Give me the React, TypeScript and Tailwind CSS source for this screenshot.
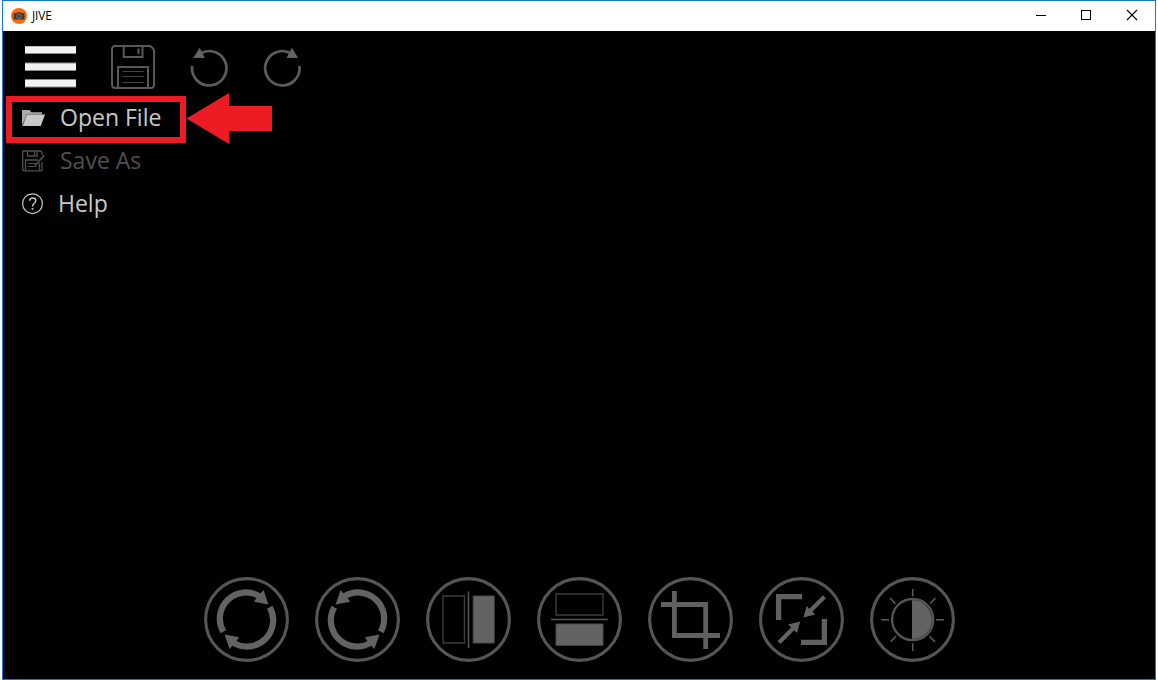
import type { ReactNode } from "react";

function AppLogo() {
  return (
    <svg className="h-4 w-4" viewBox="0 0 16 16">
      <circle cx="8" cy="8" r="8" fill="#ff6a0a" />
      <path d="M2.600 5h3l.8-.8h3.300l.8.8h3v6.400H2.600z" fill="#3c3c3c" />
      <circle cx="8" cy="8.100" r="2.200" fill="#4a4038" stroke="#858585" strokeWidth=".8" />
    </svg>
  );
}

function TitleBar() {
  return (
    <header className="flex h-[30px] shrink-0 items-center justify-between bg-white pl-2">
      <div className="flex items-center gap-[5px]">
        <AppLogo />
        <span className="text-[12px] leading-4 tracking-[-0.2px] text-black">JIVE</span>
      </div>
      <div className="flex h-full items-center">
        <svg className="h-[30px] w-[45px]" viewBox="0 0 45 30" shapeRendering="crispEdges">
          <path d="M16 14h10v1H16z" />
        </svg>
        <svg className="h-[30px] w-[45px]" viewBox="0 0 45 30" shapeRendering="crispEdges">
          <path d="M16.500 9.500h9v9h-9z" fill="none" stroke="#000" />
        </svg>
        <svg className="h-[30px] w-[45px]" viewBox="0 0 45 30">
          <path d="M17 9l10 10M27 9L17 19" fill="none" stroke="#000" strokeWidth="1.100" />
        </svg>
      </div>
    </header>
  );
}

function Toolbar() {
  return (
    <div className="flex h-[65px] shrink-0 items-start pl-[22px] pt-[14px]">
      <svg className="mt-px h-[42px] w-[51px]" viewBox="0 0 51 42">
        <path d="M0 0h51v8H0zM0 16.500h51v8.500H0zM0 33h51v8.500H0z" fill="#8b8b8b" />
        <path d="M0 .5h51V7H0zM0 17.500h51V24H0zM0 34h51v6.500H0z" fill="#f2f2f2" />
      </svg>
      <svg className="ml-[35px] h-11 w-11" viewBox="0 0 44 44" fill="none" stroke="#585858">
        <path d="M4.500 1H38.500Q39.500 1 40.300 1.800l1.900 1.900Q43 4.500 43 5.500v34Q43 43 39.500 43h-35Q1 43 1 39.500v-35Q1 1 4.500 1z" strokeWidth="2" />
        <path d="M12.700 1.500V12h18.800V1.500M7 43V22h30v21" strokeWidth="2" />
        <path d="M27.500 3.500V9" strokeWidth="2" />
        <path d="M11.500 26.500h21M11.500 31.500h21M11.500 37.500h21" stroke="#444" />
      </svg>
      <svg className="ml-[35px] mt-[2px] h-11 w-10" viewBox="0 0 40 44">
        <path d="M2.200 19A17.200 17.200 0 1 0 12 5.700" fill="none" stroke="#5c5c5c" strokeWidth="2.700" />
        <path d="M9.700.8L3.200 10.900l11.700.2z" fill="#636363" />
      </svg>
      <svg className="ml-[33px] mt-[2px] h-11 w-10" viewBox="0 0 40 44">
        <path d="M36.400 19A17.200 17.200 0 1 1 26.600 5.700" fill="none" stroke="#5c5c5c" strokeWidth="2.700" />
        <path d="M28.900.8l6.300 10.100-11.700.2z" fill="#636363" />
      </svg>
    </div>
  );
}

function Menu() {
  return (
    <nav className="flex flex-col pl-[19px] text-[23px] text-[#c8c8c8]">
      <div className="flex h-[43px] items-center">
        <svg className="h-[22px] w-[23px]" viewBox="0 0 23 22">
          <path d="M0 18.500V3h7.500l2 2.300H20V9H5z" fill="#aaa" />
          <path d="M4.800 7.500H23L18.800 19H.5z" fill="#c8c8c8" />
          <path d="M.5 18.500L4.800 7.300H22" fill="none" stroke="#666" strokeWidth=".7" />
        </svg>
        <span className="ml-[15px] whitespace-nowrap">Open File</span>
      </div>
      <div className="flex h-[43px] items-center text-[#505050]">
        <svg className="h-[22px] w-[23px]" viewBox="0 0 23 22" fill="none" stroke="#505050">
          <path d="M20 5V2.500L18.500 1H1.500L.7 2v18l.8.8h17.700l.8-.8v-8" strokeWidth="1.300" />
          <path d="M5.500 1v5h9.500V1M12.500 2v3M3.500 20.500V10H16M17.500 13v7.500" strokeWidth="1.300" />
          <path d="M5.500 13.500h8M5.500 16.500h9" />
          <path d="M22 5.500l-7.500 8.500-2 .8" strokeWidth="1.800" />
        </svg>
        <span className="ml-[15px] whitespace-nowrap">Save As</span>
      </div>
      <div className="flex h-[43px] items-center">
        <svg className="h-[22px] w-[22px]" viewBox="0 0 22 22" fill="none" stroke="#c8c8c8">
          <circle cx="10.500" cy="10.700" r="9.900" strokeWidth="1.200" />
          <path d="M7.600 7.800Q7.800 4.900 10.700 4.900q3.100 0 3.100 2.700 0 1.600-1.700 2.900-1.500 1.200-1.500 2.900" strokeWidth="1.500" />
          <path d="M10.500 14.900v1.800" strokeWidth="1.800" />
        </svg>
        <span className="ml-[14px] whitespace-nowrap">Help</span>
      </div>
    </nav>
  );
}

function Callout() {
  return (
    <>
      <div className="absolute left-[3px] top-[65px] h-[47px] w-[180px] border-6 border-[#ed1c24]" />
      <svg className="absolute left-[183px] top-[62px] h-[52px] w-[87px]" viewBox="0 0 87 52">
        <path d="M.5 25.500L43 0v13h43v25H43v13z" fill="#ed1c24" />
      </svg>
    </>
  );
}

function RotateArrows() {
  return (
    <>
      <path d="M19.300 54.700A26.200 26.200 0 0 1 56 19.500M65.700 30.300A26.200 26.200 0 0 1 29 65.500" fill="none" stroke="#636363" strokeWidth="6.200" />
      <path d="M59.500 13L64.400 27.500 49.800 24.800 54 19zM25.500 72L20.600 57.500 35.200 60.200 31 66z" />
    </>
  );
}

const tools: { name: string; icon: ReactNode }[] = [
  { name: "rotate-right", icon: <RotateArrows /> },
  { name: "rotate-left", icon: <g transform="translate(85 0) scale(-1 1)"><RotateArrows /></g> },
  {
    name: "flip-horizontal",
    icon: (
      <>
        <path d="M17 19h21.500v47H17z" fill="none" stroke="#3c3c3c" strokeWidth="1.400" />
        <path d="M42.500 14.300V71" stroke="#555" strokeWidth="1.500" />
        <path d="M47.200 19h21v47h-21z" stroke="#4c4c4c" />
      </>
    ),
  },
  {
    name: "flip-vertical",
    icon: (
      <>
        <path d="M19 17h47v21H19z" fill="none" stroke="#3c3c3c" strokeWidth="1.400" />
        <path d="M14 42.500h57" stroke="#555" strokeWidth="1.500" />
        <path d="M19 47h47v21.300H19z" stroke="#4c4c4c" />
      </>
    ),
  },
  {
    name: "crop",
    icon: <path d="M26.400 14v44.500H72M13 27.500h44.700V72" fill="none" stroke="#606060" strokeWidth="4.800" />,
  },
  {
    name: "resize",
    icon: (
      <>
        <path d="M19.600 43V19.600H43M65.400 42v23.400H42" fill="none" stroke="#606060" strokeWidth="5.300" />
        <path d="M65.500 19.700L49.500 35.500M20 65.500L36 49.500" stroke="#636363" strokeWidth="4.200" />
        <path d="M44.400 40.400l3.200-11.400 8.700 8.500zM41.200 44.500l-3.200 11.500-8.900-8.500z" />
      </>
    ),
  },
  {
    name: "brightness",
    icon: (
      <>
        <circle cx="42.700" cy="42.600" r="20.600" fill="none" stroke="#555" strokeWidth="2.300" />
        <path d="M42 23.300h.7a19.300 19.300 0 0 1 0 38.600H42z" />
        <path d="M42.700 12v7.300M42.700 66.300V74M11.300 42.700H19M66 42.700h8M20 21l5.500 5.700M65.500 21L60 26.700M20.500 64.700l5.500-5.500M65 65l-5.500-5.700" stroke="#5c5c5c" strokeWidth="1.500" />
      </>
    ),
  },
];

export default function App() {
  return (
    <div className="h-[680px] w-[1158px] overflow-hidden bg-white px-[2px] font-['Open_Sans','Noto_Sans',sans-serif]">
      <div className="flex h-full flex-col border border-[#1878c8]">
        <TitleBar />
        <main className="relative flex min-h-0 flex-1 flex-col bg-black">
          <Toolbar />
          <Menu />
          <Callout />
          <div className="mt-auto flex gap-[26px] pb-[17px] pl-[201px]">
            {tools.map((tool) => (
              <svg key={tool.name} className="h-[85px] w-[85px]" viewBox="0 0 85 85" fill="#636363">
                <circle cx="42.500" cy="42.500" r="40.900" fill="none" stroke="#555" strokeWidth="3.100" />
                {tool.icon}
              </svg>
            ))}
          </div>
        </main>
      </div>
    </div>
  );
}
